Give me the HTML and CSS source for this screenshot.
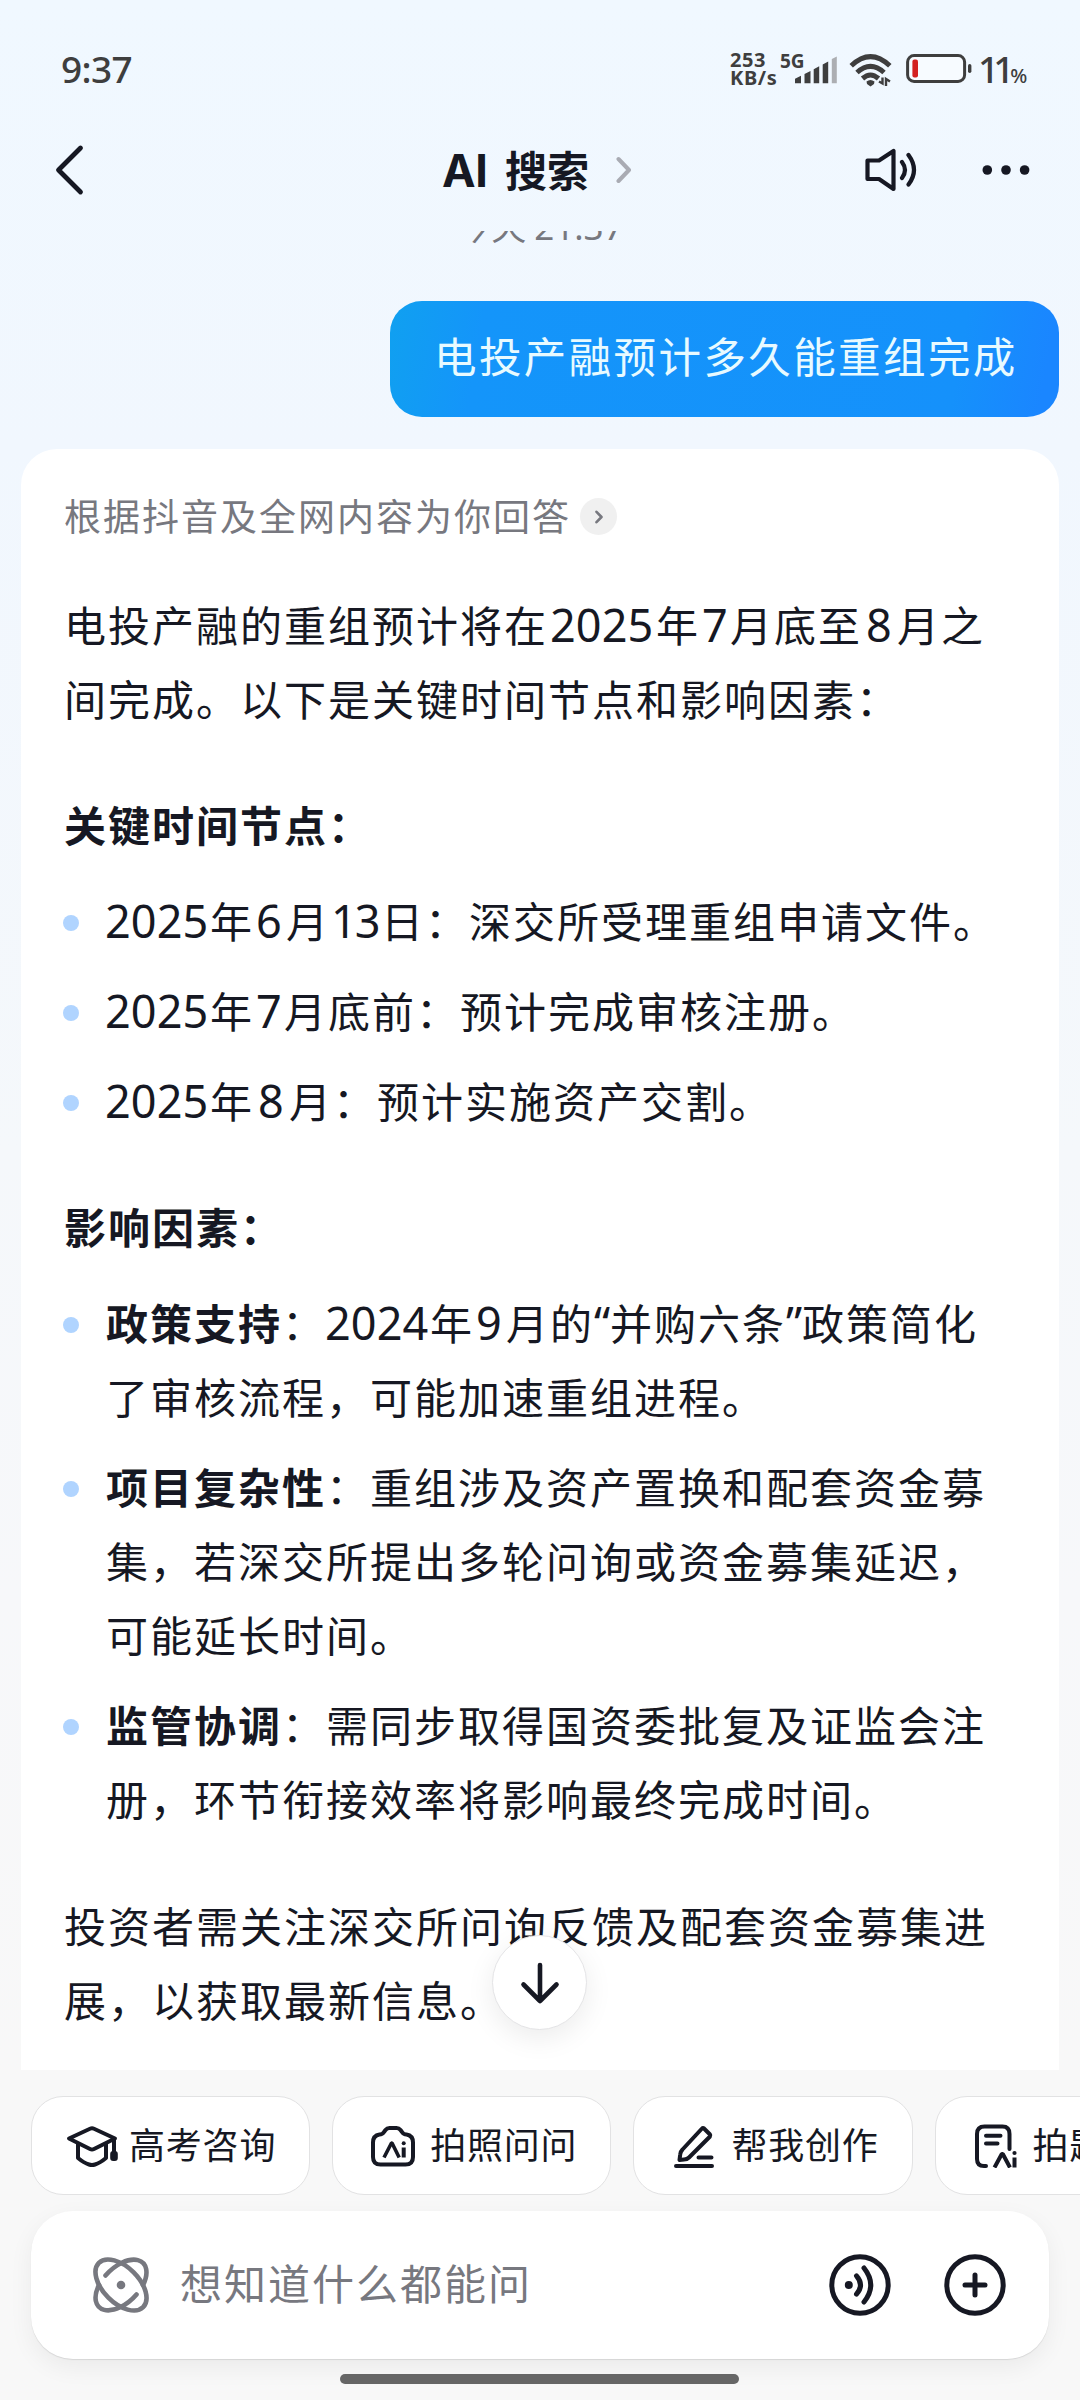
FILE: index.html
```html
<!DOCTYPE html>
<html lang="zh-CN">
<head>
<meta charset="utf-8">
<title>AI 搜索</title>
<link rel="stylesheet" href="styles.css">
</head>
<body>
<div class="status">
  <span class="clock">9:37</span>
  <div class="status-right">
    <div class="speed"><span>253</span><span>KB/s</span></div>
    <div class="signal">
      <span class="net">5G</span>
      <svg width="43" height="28" viewBox="0 0 43 28" fill="#3e3e3e">
        <path d="M0 27.3v-4.5l6-3v7.500zM9.500 27.300V18l6-3v12.300zM18.700 27.300V13.200l5.500-3v17.100zM27.700 27.300V8.500l5.500-3v21.800z"/>
        <path fill="#acaeb2" d="M36.800 27.300V3l5-2.500v26.800z"/>
      </svg>
    </div>
    <svg class="wifi" width="44" height="34" viewBox="0 0 44 34" fill="none" stroke="#3e3e3e" stroke-width="5">
      <path d="M2.200 12.800Q21.500-5.500 40.800 12.800M8 19.500Q21.500 7.200 35 19.500M13.500 25.500Q21.500 18.500 29.500 25.500"/>
      <path fill="#3e3e3e" stroke="none" d="M17.500 28.500q4-3 8 0l-.5 2.500-3.500 2.500-3.500-2.500z"/>
      <path stroke-width="2.400" d="M30 28.500l3.500 2V24.500M37 33v-7l4 2.500"/>
    </svg>
    <svg class="battery" width="66" height="30" viewBox="0 0 66 30">
      <rect x="1.600" y="1.600" width="57" height="25.800" rx="6.500" fill="#f7fbff" stroke="#3e3e3e" stroke-width="3"/>
      <rect x="6.400" y="5.500" width="5.600" height="18" rx="2" fill="#d32020"/>
      <rect x="62" y="10" width="3.400" height="9" rx="1.700" fill="#3e3e3e"/>
    </svg>
    <span class="level">11<small>%</small></span>
  </div>
</div>

<header class="nav">
  <svg class="back" width="30" height="52" viewBox="0 0 30 52" fill="none" stroke="#161823" stroke-width="4.800" stroke-linecap="round" stroke-linejoin="round"><path d="M25.500 4 3.500 26l22 22"/></svg>
  <div class="title">
    <h1><span class="latin">AI</span> 搜索</h1>
    <svg width="16" height="28" viewBox="0 0 16 28" fill="none" stroke="#a9abb3" stroke-width="4" stroke-linecap="round" stroke-linejoin="round"><path d="M2.500 3 13 14 2.500 25"/></svg>
  </div>
  <div class="nav-actions">
    <svg width="54" height="44" viewBox="0 0 54 44" fill="none" stroke="#161823" stroke-width="4.200" stroke-linecap="round" stroke-linejoin="round"><path d="M2.500 12.500H14L28.500 3v38L14 31H2.500zM37 14q6 8 0 16M43.500 7q11 15 0 29.500"/></svg>
    <svg width="48" height="12" viewBox="0 0 48 12" fill="#161823"><circle cx="5.300" cy="6" r="4.800"/><circle cx="24" cy="6" r="4.800"/><circle cx="42.600" cy="6" r="4.800"/></svg>
  </div>
</header>

<main class="chat">
  <div class="time">今天 <span>21:37</span></div>
  <div class="bubble">电投产融预计多久能重组完成</div>
  <article class="card">
    <div class="source">根据抖音及全网内容为你回答
      <i><svg width="10" height="14" viewBox="0 0 10 14" fill="none" stroke="#77787f" stroke-width="2.600" stroke-linecap="round" stroke-linejoin="round"><path d="M2.500 1.800 7.500 7l-5 5.200"/></svg></i>
    </div>
    <p>电投产融的重组预计将在<b class="n n4">2025</b>年<b class="n n7">7</b>月底至<b class="n n8">8</b>月之<br>间完成。以下是关键时间节点和影响因素：</p>
    <h2>关键时间节点：</h2>
    <ul>
      <li><b class="n first">2025</b>年<b class="n n6">6</b>月<b class="n n13">13</b>日：深交所受理重组申请文件。</li>
      <li><b class="n first">2025</b>年<b class="n n7">7</b>月底前：预计完成审核注册。</li>
      <li><b class="n first">2025</b>年<b class="n n8">8</b>月：预计实施资产交割。</li>
    </ul>
    <h2>影响因素：</h2>
    <ul>
      <li><strong>政策支持</strong>：<b class="n first">2024</b>年<b class="n n6">9</b>月的<b class="n q">“</b>并购六条<b class="n q">”</b>政策简化<br>了审核流程，可能加速重组进程。</li>
      <li><strong>项目复杂性</strong>：重组涉及资产置换和配套资金募<br>集，若深交所提出多轮问询或资金募集延迟，<br>可能延长时间。</li>
      <li><strong>监管协调</strong>：需同步取得国资委批复及证监会注<br>册，环节衔接效率将影响最终完成时间。</li>
    </ul>
    <p>投资者需关注深交所问询反馈及配套资金募集进<br>展，以获取最新信息。</p>
  </article>
  <button class="to-bottom" aria-label="回到底部">
    <svg width="42" height="44" viewBox="0 0 42 44" fill="none" stroke="#161823" stroke-width="4.600" stroke-linecap="round" stroke-linejoin="round"><path d="M21 4v36M4.500 23.500 21 40l16.500-16.500"/></svg>
  </button>
</main>

<footer>
  <div class="chips">
    <div class="chip">
      <svg width="52" height="44" viewBox="0 0 52 44" fill="none" stroke="#161823" stroke-width="4" stroke-linecap="round" stroke-linejoin="round"><path d="M3 14.500 24 4.800q2-.9 4 0L49 14.500 28 25q-2 1-4 0zM12 20v14q6 5 11 6.500 3 1 6 0 5-1.500 11-6.500V20M48 15v14"/><rect x="46.200" y="29" width="3.600" height="6" rx="1"/></svg>
      <span>高考咨询</span>
    </div>
    <div class="chip">
      <svg width="52" height="44" viewBox="0 0 52 44" fill="none" stroke="#161823" stroke-width="4" stroke-linecap="round" stroke-linejoin="round"><path d="M12.500 10.500q3 0 4.500-2.500l1.500-2q1.500-2 4-2h7q2.500 0 4 2L35 8q1.500 2.500 4.500 2.500 6.500 1 6.500 8V33q0 7.500-7.500 7.500h-25Q6 40.500 6 33V18.500q0-7 6.500-8z"/><path stroke-linecap="butt" stroke-linejoin="bevel" stroke-width="3.600" d="M17 33.500 24.500 19h.5L32.200 33.500"/><path stroke-linecap="butt" d="M36.700 23.500v10"/><circle cx="36.700" cy="19.300" r="2" fill="#161823" stroke="none"/></svg>
      <span>拍照问问</span>
    </div>
    <div class="chip">
      <svg width="52" height="44" viewBox="0 0 52 44" fill="none" stroke="#161823" stroke-width="4" stroke-linecap="round" stroke-linejoin="round"><path d="M35.500 4 42 10.500q.8 1 0 2L21 33.500q-2 2-5 2l-4.500.5.7-5.500q.3-3 2.300-5L34 4.500q.7-.8 1.500-.5zM30.500 33.500h13M8 42h36"/></svg>
      <span>帮我创作</span>
    </div>
    <div class="chip">
      <svg width="52" height="44" viewBox="0 0 52 44" fill="none" stroke="#161823" stroke-width="4" stroke-linecap="round" stroke-linejoin="round"><path d="M16 42h-2q-7 0-7-7V10q0-7.500 7.500-7.500h18Q39.500 2.500 39.500 10v15M16 11.800h14.500M16 19.500h11.500"/><path stroke-linecap="butt" stroke-linejoin="bevel" d="M24.500 43.500 31.800 30h1L40 43.500M44.500 33.500v10"/><circle cx="44.500" cy="29" r="2.100" fill="#161823" stroke="none"/></svg>
      <span>拍题答疑</span>
    </div>
  </div>
  <div class="input">
    <svg class="atom" width="60" height="60" viewBox="-30 -30 60 60" fill="none" stroke="#77787f" stroke-width="4.600" stroke-linecap="round">
      <ellipse rx="31.300" ry="17.900" transform="rotate(45)"/>
      <path d="M-15.500-9.500A31.300 17.900-45 0 1 22 0M15.500 9.500A31.300 17.900-45 0 1-22 0"/>
      <circle r="4.300" fill="#77787f" stroke="none"/>
    </svg>
    <span class="placeholder">想知道什么都能问</span>
    <svg width="62" height="64" viewBox="-31 -32 62 64" fill="none" stroke="#161823" stroke-width="5" stroke-linecap="round"><circle r="28.200"/><circle cx="-11.200" r="4" fill="#161823" stroke="none"/><path d="M-3.500-9.200Q4.500 0-3.500 9.200M4-17Q17.500 0 4 17"/></svg>
    <svg width="62" height="64" viewBox="-31 -32 62 64" fill="none" stroke="#161823" stroke-width="5" stroke-linecap="round"><circle r="28.200"/><path d="M-10 0h20M0-10v20"/></svg>
  </div>
  <div class="home"></div>
</footer>
</body>
</html>
```
FILE: styles.css
```css
* { box-sizing: border-box; }
body {
  margin: 0;
  width: 1080px;
  height: 2400px;
  overflow: hidden;
  display: flex;
  flex-direction: column;
  background: linear-gradient(#f0f8ff 0, #f1f7fe 450px, #f5f8fb 1150px, #f7f8fa 1600px, #f8f8f8 2070px);
  color: #161823;
  font-family: "Noto Sans CJK SC", sans-serif;
  font-weight: 400;
  text-spacing-trim: space-all;
  text-autospace: no-autospace;
}
svg { display: block; flex: none; }

.status {
  height: 112px;
  padding: 0 54px 0 61px;
  display: flex;
  justify-content: space-between;
  font-family: "Noto Sans", sans-serif;
  color: #3e3e3e;
}
.clock { font-size: 37px; line-height: 50px; margin-top: 44px; font-weight: 500; letter-spacing: -0.6px; }
.status-right { display: flex; align-items: flex-start; }
.speed {
  display: flex;
  flex-direction: column;
  margin-top: 51px;
  width: 50px;
  font-size: 20px;
  font-weight: 700;
  line-height: 18px;
  letter-spacing: 0.6px;
}
.signal { display: flex; flex-direction: column; width: 69px; margin-top: 52px; }
.signal svg { margin: -14px 0 0 15px; }
.net { font-size: 19px; font-weight: 700; line-height: 18px; }
.wifi { margin-top: 53px; }
.battery { margin: 54px 0 0 13px; }
.level { margin: 44px 0 0 6px; width: 48px; font-size: 37px; line-height: 50px; font-weight: 500; letter-spacing: -6px; white-space: nowrap; }
.level small { font-size: 20px; margin-left: 2px; letter-spacing: 0; }

.nav {
  height: 119px;
  padding: 0 50px 3px 55px;
  display: grid;
  grid-template-columns: 1fr auto 1fr;
  align-items: center;
}
.title { display: flex; align-items: center; gap: 27px; padding-right: 11px; }
.title h1 { margin: 0; font-size: 42px; font-weight: 700; line-height: 60px; white-space: nowrap; word-spacing: 8px; }
.latin { font-family: Inter, sans-serif; font-size: 45px; letter-spacing: -0.5px; }
.nav-actions { display: flex; align-items: center; justify-content: flex-end; gap: 63px; }

.chat { height: 1839px; position: relative; overflow: hidden; padding: 0 21px; display: flex; flex-direction: column; }
.time { flex: none; margin-top: -40px; height: 110px; line-height: 68px; text-align: center; font-size: 35px; color: #77787f; white-space: pre; }
.time span { font-family: "Noto Sans", sans-serif; }
.bubble {
  flex: none;
  align-self: flex-end;
  width: 669px;
  height: 116px;
  border-radius: 32px;
  padding-left: 44px;
  background: linear-gradient(100deg, #10a0f0 0, #1495fa 14%, #1591fb 84%, #1a86ff 97%);
  color: #e8faff;
  font-size: 42.5px;
  letter-spacing: 2.4px;
  line-height: 107px;
  white-space: nowrap;
}
.card {
  margin-top: 32px;
  height: 1640px;
  flex: none;
  border-radius: 36px 36px 0 0;
  background: #fff;
  padding: 36px 0 0 43px;
  font-size: 42px;
  letter-spacing: 2px;
  line-height: 74px;
  white-space: nowrap;
}
.source { display: flex; align-items: center; gap: 9px; height: 60px; font-size: 37px; letter-spacing: 2px; color: #77787f; }
.source i { width: 37px; height: 37px; margin-top: 3px; border-radius: 50%; background: #f0f0f0; display: flex; align-items: center; justify-content: center; }
.card p, .card h2 { margin: 0; font-size: inherit; }
.card h2 { font-weight: 600; margin: 52px 0 22px; }
.source + p { margin-top: 42px; }
.card ul + p { margin-top: 53px; }
.card strong { font-weight: 600; }
.card ul { margin: 0; padding: 0; list-style: none; display: flex; flex-direction: column; gap: 16px; }
.card li { position: relative; padding-left: 42px; }
.card li::before {
  content: "";
  position: absolute;
  left: -1px;
  top: 32px;
  width: 16px;
  height: 16px;
  border-radius: 50%;
  background: #b0d4ff;
}
/* Digit runs keep a fixed advance between the surrounding characters. */
.n { display: inline-block; font: 400 45px/60px "Noto Sans", sans-serif; letter-spacing: 0.1px; padding-left: 2px; }
.n4 { width: 108px; }
.first { width: 104px; padding-left: 0; text-indent: -1px; }
.n6 { width: 32px; }
.n7 { width: 30px; }
.n8 { width: 35px; padding-left: 4px; }
.n13 { width: 51px; padding-left: 1px; letter-spacing: -2px; }
.q { width: 16px; padding-left: 0; }

.to-bottom {
  position: absolute;
  left: 492px;
  top: 1704px;
  width: 95px;
  height: 95px;
  border: 1px solid #e4e4e6;
  border-radius: 50%;
  background: #fff;
  box-shadow: 0 8px 28px rgba(0, 0, 0, 0.08);
  display: flex;
  align-items: center;
  justify-content: center;
  padding: 0;
}

footer { height: 330px; background: #f8f8f8; overflow: hidden; }
.chips { display: flex; gap: 22px; padding: 26px 0 0 31px; }
.chip {
  flex: none;
  width: 279.200px;
  height: 99px;
  border: 1px solid #e2e2e3;
  border-radius: 32px;
  background: #fff;
  display: flex;
  align-items: center;
  gap: 11px;
  padding-left: 34px;
  font-size: 36px;
  letter-spacing: 0.800px;
  white-space: nowrap;
}
.chip span { line-height: 60px; margin-top: -5px; }
.input {
  margin: 16px 31px 0;
  height: 148px;
  border-radius: 42px;
  background: #fff;
  box-shadow: 0 1px 1px rgba(0, 0, 0, 0.1), 0 8px 24px rgba(0, 0, 0, 0.06);
  display: flex;
  align-items: center;
  padding: 0 43px 0 60px;
}
.placeholder { flex: 1; margin-left: 29px; margin-top: -7px; font-size: 42px; letter-spacing: 2px; color: #77787f; }
.input svg:last-child { margin-left: 53px; }
.home { width: 399px; height: 10px; margin: 15px 0 0 340px; border-radius: 5px; background: #666; }
```
